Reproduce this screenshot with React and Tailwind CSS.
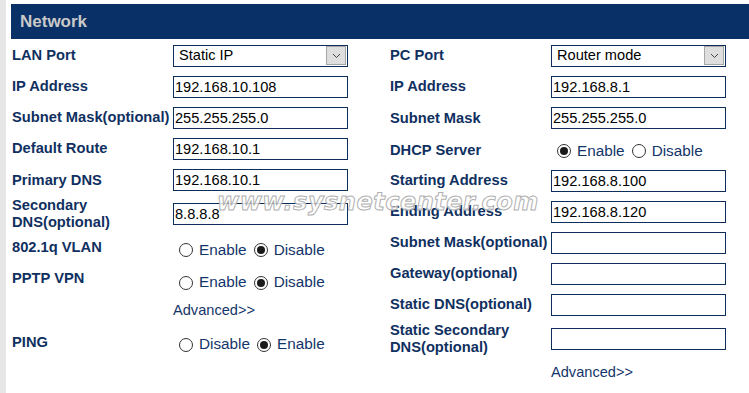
import React from 'react';

const font = "font-['Liberation_Sans',Arial,sans-serif]";

const Label = ({ children, className = '' }) => (
  <div className={`w-[161px] shrink-0 text-[14.7px] font-bold leading-[17px] text-[#10305f] ${className}`}>{children}</div>
);

const TextBox = ({ value = '' }) => (
  <div className="w-[175px] h-[22px] border border-[#0d2d5a] bg-white pl-[1px] text-[14.6px] leading-[20px] text-black">
    {value}
  </div>
);

const SelectBox = ({ value }) => (
  <div className="w-[175px] h-[22px] border border-[#0d2d5a] bg-white flex items-center justify-between pl-[5px] pr-[1px]">
    <span className="text-[14.6px] text-black">{value}</span>
    <span className="w-[20px] h-[19px] border border-[#a8a8a8] bg-[#dedede] flex items-center justify-center">
      <svg width="9" height="6" viewBox="0 0 9 6">
        <path d="M1 1l3.5 3.5L8 1" fill="none" stroke="#444" strokeWidth="1" />
      </svg>
    </span>
  </div>
);

const Radio = ({ checked, label }) => (
  <span className="flex items-center mr-[7px]">
    <span className="w-[14px] h-[14px] rounded-full border border-[#333] bg-white flex items-center justify-center mr-[6px]">
      {checked && <span className="w-[8px] h-[8px] rounded-full bg-[#1a1a1a]" />}
    </span>
    <span className="text-[15.3px] text-[#14356a]">{label}</span>
  </span>
);

const Row = ({ h = 'h-[31px]', children }) => <div className={`flex items-center ${h}`}>{children}</div>;

export default function App() {
  return (
    <div className={`w-[749px] h-[393px] bg-white flex overflow-hidden relative ${font}`}>
      <div className="w-[6px] h-full bg-[#e6e6e6]" />
      <div className="w-[5px]" />
      <div className="flex-1 flex flex-col">
        <div className="mt-[4px] h-[35px] bg-[#0a3167] flex items-center pl-[9px]">
          <span className="text-[17px] font-bold text-[#c9c9c9]">Network</span>
        </div>
        <div className="flex pt-[1px]">
          <div className="w-[379px] pl-[1px]">
            <Row><Label>LAN Port</Label><SelectBox value="Static IP" /></Row>
            <Row><Label>IP Address</Label><TextBox value="192.168.10.108" /></Row>
            <Row><Label>Subnet Mask(optional)</Label><TextBox value="255.255.255.0" /></Row>
            <Row><Label>Default Route</Label><TextBox value="192.168.10.1" /></Row>
            <Row h="h-[32px]"><Label>Primary DNS</Label><TextBox value="192.168.10.1" /></Row>
            <Row h="h-[35px]"><Label>Secondary<br />DNS(optional)</Label><TextBox value="8.8.8.8" /></Row>
            <Row h="h-[32px]">
              <Label>802.1q VLAN</Label>
              <div className="flex pl-[6px] mt-[6px]"><Radio label="Enable" /><Radio checked label="Disable" /></div>
            </Row>
            <Row h="h-[32px]">
              <Label className="-mt-[1px]">PPTP VPN</Label>
              <div className="flex pl-[6px] mt-[7px]"><Radio label="Enable" /><Radio checked label="Disable" /></div>
            </Row>
            <Row h="h-[32px]"><Label /><span className="text-[14.6px] text-[#14356a]">Advanced&gt;&gt;</span></Row>
            <Row h="h-[31px]">
              <Label>PING</Label>
              <div className="flex pl-[6px] mt-[4px]"><Radio label="Disable" /><Radio checked label="Enable" /></div>
            </Row>
          </div>
          <div className="flex-1">
            <Row><Label>PC Port</Label><SelectBox value="Router mode" /></Row>
            <Row><Label>IP Address</Label><TextBox value="192.168.8.1" /></Row>
            <Row h="h-[32px]"><Label>Subnet Mask</Label><TextBox value="255.255.255.0" /></Row>
            <Row>
              <Label className="mt-[1px]">DHCP Server</Label>
              <div className="flex pl-[6px] mt-[3px]"><Radio checked label="Enable" /><Radio label="Disable" /></div>
            </Row>
            <Row><Label>Starting Address</Label><TextBox value="192.168.8.100" /></Row>
            <Row><Label>Ending Address</Label><TextBox value="192.168.8.120" /></Row>
            <Row><Label>Subnet Mask(optional)</Label><TextBox /></Row>
            <Row><Label>Gateway(optional)</Label><TextBox /></Row>
            <Row><Label>Static DNS(optional)</Label><TextBox /></Row>
            <Row h="h-[38px]"><Label>Static Secondary<br />DNS(optional)</Label><TextBox /></Row>
            <Row h="h-[30px]"><Label /><span className="text-[14.6px] text-[#14356a]">Advanced&gt;&gt;</span></Row>
          </div>
        </div>
      </div>
      <div className="absolute left-[217px] top-[184px] text-[24px] font-bold italic tracking-[0.5px] text-white/80 font-['DejaVu_Sans',sans-serif] [-webkit-text-stroke:1px_#b0b0b0] pointer-events-none">
        www.sysnetcenter.com
      </div>
    </div>
  );
}
